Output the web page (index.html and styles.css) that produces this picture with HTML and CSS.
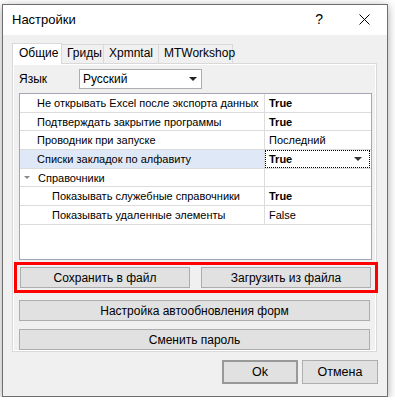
FILE: index.html
```html
<!DOCTYPE html>
<html>

<head>
  <title>Настройки</title>
  <meta charset="utf-8">
  <link rel="stylesheet" href="styles.css">
</head>

<body>
  <div class="window">
    <div class="titlebar">
      <span class="title">Настройки</span>
      <span class="help">?</span>
      <svg class="close" width="11" height="11" viewBox="0 0 11 11">
        <path d="M0.5 0.5 L10.5 10.5 M10.5 0.5 L0.5 10.5" stroke="#000" stroke-width="1" fill="none" />
      </svg>
    </div>

    <div class="body">
      <div class="tabs">
        <div class="tab active">Общие</div>
        <div class="tab">Гриды</div>
        <div class="tab">Xpmntal</div>
        <div class="tab">MTWorkshop</div>
      </div>

      <div class="panel">
        <div class="lang-row">
          <span class="lang-label">Язык</span>
          <div class="combo">
            <span>Русский</span>
            <span class="arrow"></span>
          </div>
        </div>

        <div class="grid">
          <div class="row">
            <div class="name">Не открывать Excel после экспорта данных</div>
            <div class="value bold">True</div>
          </div>
          <div class="row">
            <div class="name">Подтверждать закрытие программы</div>
            <div class="value bold">True</div>
          </div>
          <div class="row">
            <div class="name">Проводник при запуске</div>
            <div class="value">Последний</div>
          </div>
          <div class="row selected">
            <div class="name">Списки закладок по алфавиту</div>
            <div class="value bold editing">True<span class="arrow"></span></div>
          </div>
          <div class="row category">
            <div class="name"><span class="expander"></span>Справочники</div>
            <div class="value"></div>
          </div>
          <div class="row">
            <div class="name sub">Показывать служебные справочники</div>
            <div class="value bold">True</div>
          </div>
          <div class="row">
            <div class="name sub">Показывать удаленные элементы</div>
            <div class="value">False</div>
          </div>
        </div>

        <div class="highlight">
          <button class="button half">Сохранить в файл</button>
          <button class="button half">Загрузить из файла</button>
        </div>
        <button class="button wide">Настройка автообновления форм</button>
        <button class="button wide">Сменить пароль</button>
      </div>

      <div class="footer">
        <button class="button dialog default">Ok</button>
        <button class="button dialog">Отмена</button>
      </div>
    </div>
  </div>
</body>
</html>
```

FILE: styles.css
```css
/* global */
* {
  box-sizing: border-box;
}

body,
html {
  margin: 0;
  padding: 0;
  background: #fff;
  font-family: 'Liberation Sans', Arial, sans-serif;
  color: #000;
}

/* window frame */
.window {
  margin: 4px 0 0 2px;
  width: 386px;
  height: 393px;
  border: 1px solid #6f6f6f;
  box-shadow: 0 2px 9px rgba(0, 0, 0, 0.35);
  display: flex;
  flex-direction: column;
  background: #f0f0f0;
}

.titlebar {
  height: 30px;
  background: #fff;
  display: flex;
  align-items: center;
  padding-left: 9px;
  flex-shrink: 0;
}

.title {
  font-size: 13px;
  flex: 1;
  padding-bottom: 2px;
}

.help {
  font-size: 14px;
  margin-right: 36px;
  padding-bottom: 2px;
}

.close {
  margin-right: 17px;
  margin-bottom: 2px;
}

.body {
  flex: 1;
  padding: 8px 0 0 9px;
  display: flex;
  flex-direction: column;
}

/* tabs */
.tabs {
  display: flex;
  align-items: flex-end;
  height: 20px;
  font-size: 12px;
}

.tab {
  height: 19px;
  line-height: 17px;
  padding: 0 5px;
  border: 1px solid #d9d9d9;
  border-bottom: none;
  border-left: none;
  background: #f0f0f0;
  white-space: nowrap;
}

.tab:nth-child(2) {
  width: 42px;
}

.tab:nth-child(3) {
  width: 55px;
}

.tab:nth-child(4) {
  width: 74px;
}

.tab.active {
  width: 50px;
  height: 21px;
  line-height: 19px;
  padding-left: 6px;
  background: #fff;
  border-left: 1px solid #d9d9d9;
  position: relative;
  z-index: 1;
  margin-bottom: -1px;
}

.panel {
  width: 365px;
  height: 289px;
  border: 1px solid #d9d9d9;
  box-shadow: inset 0 0 0 1px #fff;
  padding: 5px 0 0 6px;
  display: flex;
  flex-direction: column;
}

/* language */
.lang-row {
  display: flex;
  align-items: center;
  height: 20px;
  font-size: 12px;
}

.lang-label {
  width: 60px;
}

.combo {
  width: 123px;
  height: 20px;
  border: 1px solid #adadad;
  background: #fff;
  display: flex;
  align-items: center;
  justify-content: space-between;
  padding: 0 4px 0 3px;
}

.arrow {
  width: 0;
  height: 0;
  border-left: 4px solid transparent;
  border-right: 4px solid transparent;
  border-top: 4px solid #222;
}

/* property grid */
.grid {
  margin-top: 4px;
  width: 353px;
  height: 167px;
  border: 1px solid #a5a5b4;
  background: #fff;
  font-size: 11px;
}

.row {
  display: flex;
  height: 18.7px;
  border-bottom: 1px solid #dcdcdc;
}

.name {
  width: 245px;
  padding-left: 17px;
  border-right: 1px solid #dcdcdc;
  display: flex;
  align-items: center;
  white-space: nowrap;
  overflow: hidden;
}

.name.sub {
  padding-left: 32px;
}

.value {
  flex: 1;
  padding-left: 4px;
  display: flex;
  align-items: center;
}

.bold {
  font-weight: bold;
}

.selected .name {
  background: #dfe8f6;
}

.editing {
  border: 1px dotted #000;
  margin: 0 1px 0 0;
  padding-left: 3px;
  justify-content: space-between;
  padding-right: 7px;
}

.editing .arrow {
  border-top-color: #333;
}

.category .name {
  padding-left: 4px;
}

.expander {
  width: 0;
  height: 0;
  border-left: 3px solid transparent;
  border-right: 3px solid transparent;
  border-top: 3px solid #8a8a8a;
  margin-right: 8px;
}

/* buttons */
.button {
  font-family: 'Liberation Sans', Arial, sans-serif;
  font-size: 12px;
  color: #000;
  background: #e1e1e1;
  border: 1px solid #adadad;
  padding: 0;
  height: 21px;
}

.highlight {
  margin: 2px 0 0 -5px;
  width: 364px;
  height: 31px;
  border: 3px solid #f00;
  padding: 2px 4px 0 3px;
  display: flex;
  justify-content: space-between;
}

.half {
  width: 170px;
}

.wide {
  width: 351px;
  margin-top: 7px;
}

.wide + .wide {
  margin-top: 8px;
}

.footer {
  display: flex;
  justify-content: flex-end;
  gap: 4px;
  padding: 8px 9px 0 0;
}

.dialog {
  width: 76px;
  height: 24px;
  font-size: 12.5px;
}

.default {
  border: 2px solid #999;
}
```
